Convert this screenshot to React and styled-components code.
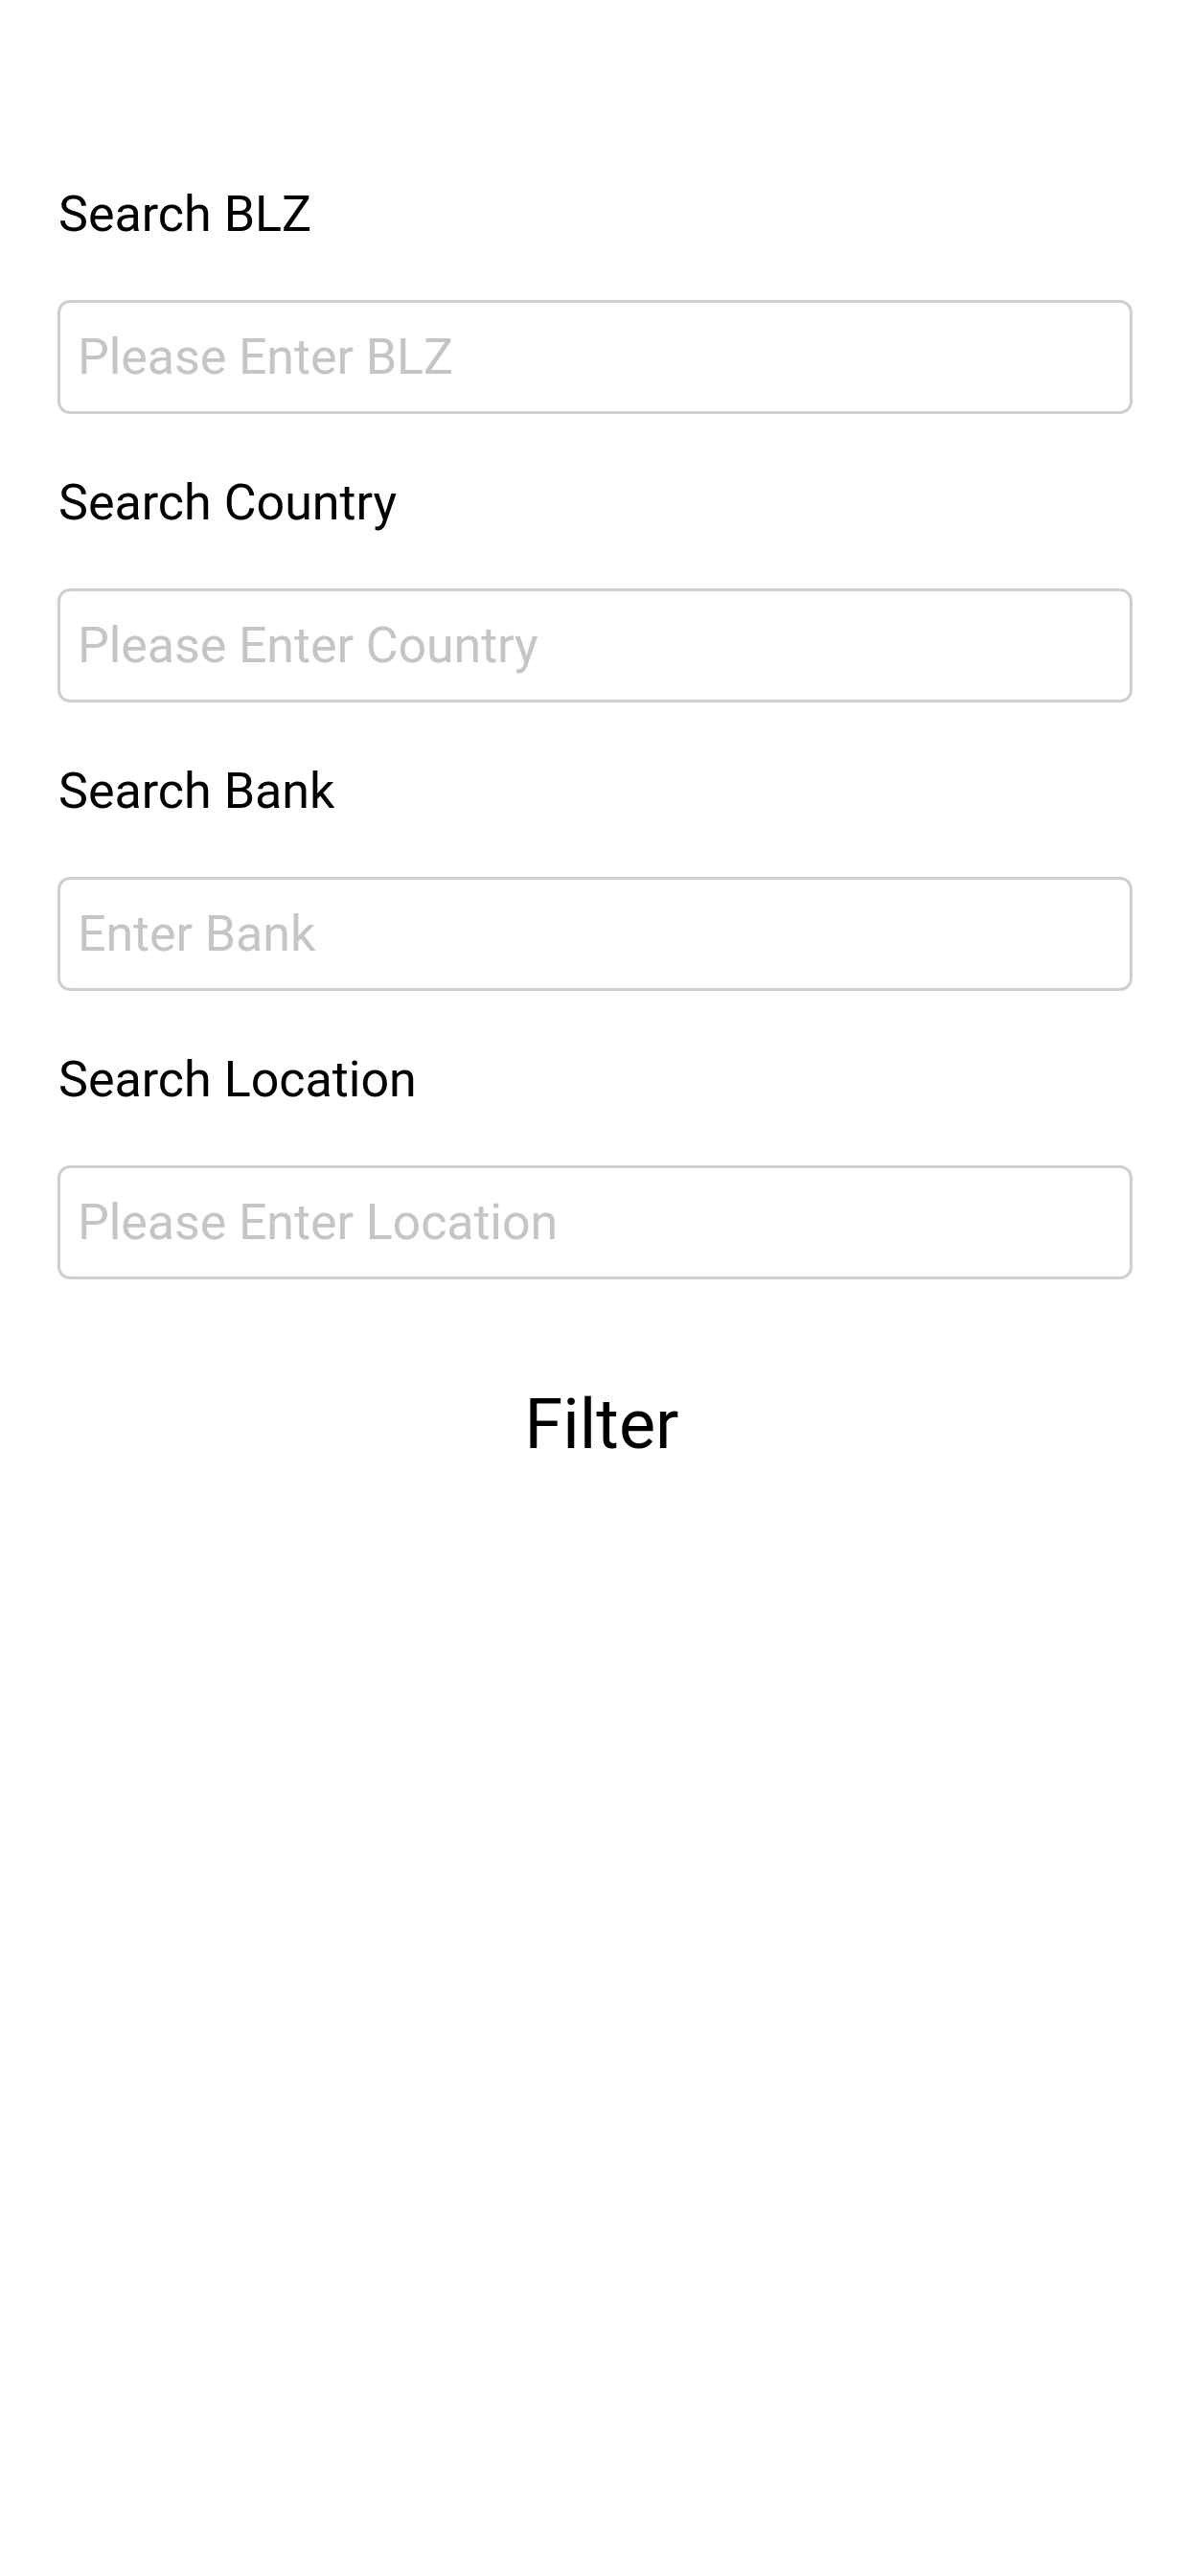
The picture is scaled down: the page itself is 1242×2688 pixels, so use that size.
import React from "react";
import styled, { createGlobalStyle } from "styled-components";

const Global = createGlobalStyle`
  html, body {
    margin: 0;
    padding: 0;
    background: #ffffff;
  }
  body {
    font-family: Roboto, "Noto Sans", sans-serif;
    -webkit-font-smoothing: antialiased;
  }
  * { box-sizing: border-box; }
`;

const Page = styled.main`
  width: 1242px;
  min-height: 2688px;
  background: #ffffff;
  padding: 194px 60px 0 60px;
  display: flex;
  flex-direction: column;
`;

const Field = styled.div`
  display: flex;
  flex-direction: column;
  gap: 59px;
  margin-bottom: 63px;
`;

const Label = styled.label`
  font-family: Roboto, "Noto Sans", sans-serif;
  font-size: 52px;
  line-height: 60px;
  height: 60px;
  color: #000000;
  padding-left: 1px;
  letter-spacing: 0;
`;

const Input = styled.input`
  width: 100%;
  height: 119px;
  border: 3px solid #cfcfcf;
  border-radius: 13px;
  padding: 0 18px;
  font-family: Roboto, "Noto Sans", sans-serif;
  font-size: 52px;
  color: #000000;
  background: #ffffff;
  outline: none;
  letter-spacing: -0.1px;

  &::placeholder {
    color: #c5c5c7;
  }
`;

const FilterButton = styled.button`
  align-self: center;
  margin-top: 46px;
  margin-left: 14px;
  border: none;
  background: none;
  padding: 0;
  font-family: Roboto, "Noto Sans", sans-serif;
  font-size: 72px;
  line-height: 86px;
  color: #000000;
  cursor: pointer;
`;

const fields = [
  { label: "Search BLZ", placeholder: "Please Enter BLZ" },
  { label: "Search Country", placeholder: "Please Enter Country" },
  { label: "Search Bank", placeholder: "Enter Bank" },
  { label: "Search Location", placeholder: "Please Enter Location" },
];

export default function App() {
  return (
    <>
      <Global />
      <Page>
        {fields.map((f) => (
          <Field key={f.label}>
            <Label>{f.label}</Label>
            <Input placeholder={f.placeholder} />
          </Field>
        ))}
        <FilterButton>Filter</FilterButton>
      </Page>
    </>
  );
}
